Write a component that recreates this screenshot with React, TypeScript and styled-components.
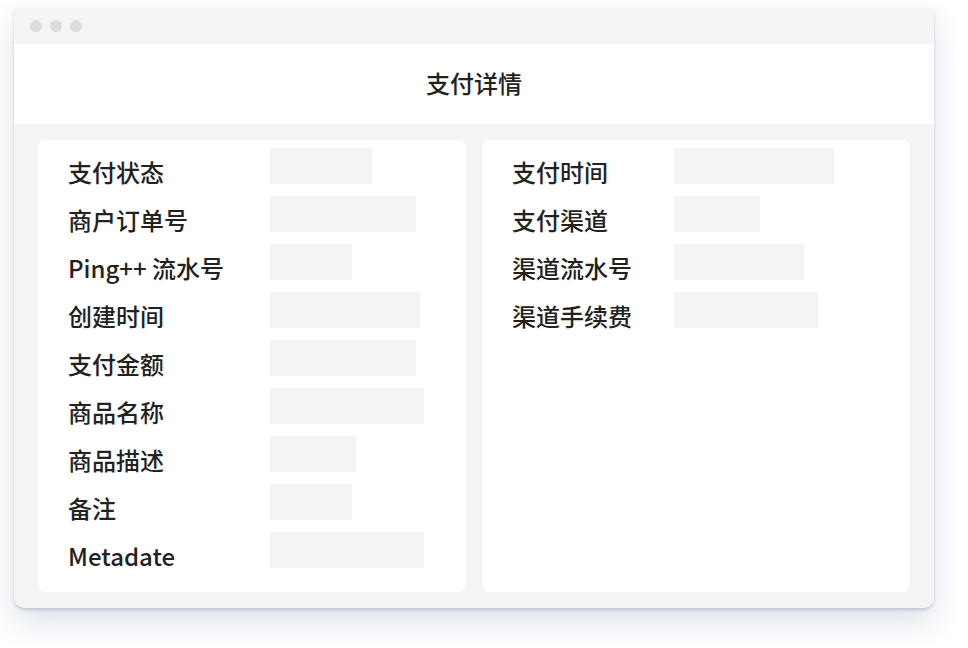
import React from "react";
import styled, { createGlobalStyle } from "styled-components";

const Global = createGlobalStyle`
  html, body { margin: 0; padding: 0; background: #ffffff; }
  body { font-family: "Noto Sans CJK SC", "Noto Sans", sans-serif; }
`;

const Page = styled.div`
  padding: 8px 0 40px 14px;
`;

const Window = styled.div`
  width: 920px;
  height: 600px;
  display: flex;
  flex-direction: column;
  background: #f4f4f4;
  border-radius: 0 0 10px 10px;
  box-shadow: 0 2px 3px rgba(50, 70, 120, 0.2), 0 14px 30px rgba(50, 70, 130, 0.16);
  overflow: hidden;
`;

const TitleBar = styled.div`
  height: 36px;
  display: flex;
  align-items: center;
  gap: 8px;
  padding-left: 16px;
  background: #f5f5f5;
`;

const Dot = styled.span`
  width: 12px;
  height: 12px;
  border-radius: 50%;
  background: #dcdcdc;
`;

const Header = styled.div`
  height: 80px;
  display: flex;
  align-items: center;
  justify-content: center;
  background: #ffffff;
  font-size: 24px;
  font-weight: 500;
  color: #222222;
  padding-bottom: 4px;
  box-sizing: border-box;
`;

const Body = styled.div`
  flex: 1;
  display: grid;
  grid-template-columns: 1fr 1fr;
  gap: 16px;
  padding: 16px 24px;
`;

const Panel = styled.div<{ $labelWidth: number }>`
  background: #ffffff;
  border-radius: 8px;
  padding: 8px 30px;
  display: flex;
  flex-direction: column;
  gap: 12px;
  --label-width: ${(p) => p.$labelWidth}px;
`;

const Row = styled.div`
  display: flex;
  align-items: flex-start;
  height: 36px;
`;

const Label = styled.div`
  width: var(--label-width);
  flex-shrink: 0;
  font-size: 24px;
  font-weight: 500;
  line-height: 36px;
  padding-top: 6px;
  color: #222222;
  white-space: nowrap;
  font-family: "Noto Sans CJK SC", "Noto Sans", sans-serif;
`;

const Placeholder = styled.div`
  height: 36px;
  background: #f4f4f4;
`;

const leftRows: [string, number][] = [
  ["支付状态", 102],
  ["商户订单号", 146],
  ["Ping++ 流水号", 82],
  ["创建时间", 150],
  ["支付金额", 146],
  ["商品名称", 154],
  ["商品描述", 86],
  ["备注", 82],
  ["Metadate", 154],
];

const rightRows: [string, number][] = [
  ["支付时间", 160],
  ["支付渠道", 86],
  ["渠道流水号", 130],
  ["渠道手续费", 144],
];

export default function App() {
  return (
    <Page>
      <Global />
      <Window>
        <TitleBar>
          <Dot />
          <Dot />
          <Dot />
        </TitleBar>
        <Header>支付详情</Header>
        <Body>
          <Panel $labelWidth={202}>
            {leftRows.map(([label, w]) => (
              <Row key={label}>
                <Label>{label}</Label>
                <Placeholder style={{ width: w }} />
              </Row>
            ))}
          </Panel>
          <Panel $labelWidth={162}>
            {rightRows.map(([label, w]) => (
              <Row key={label}>
                <Label>{label}</Label>
                <Placeholder style={{ width: w }} />
              </Row>
            ))}
          </Panel>
        </Body>
      </Window>
    </Page>
  );
}
